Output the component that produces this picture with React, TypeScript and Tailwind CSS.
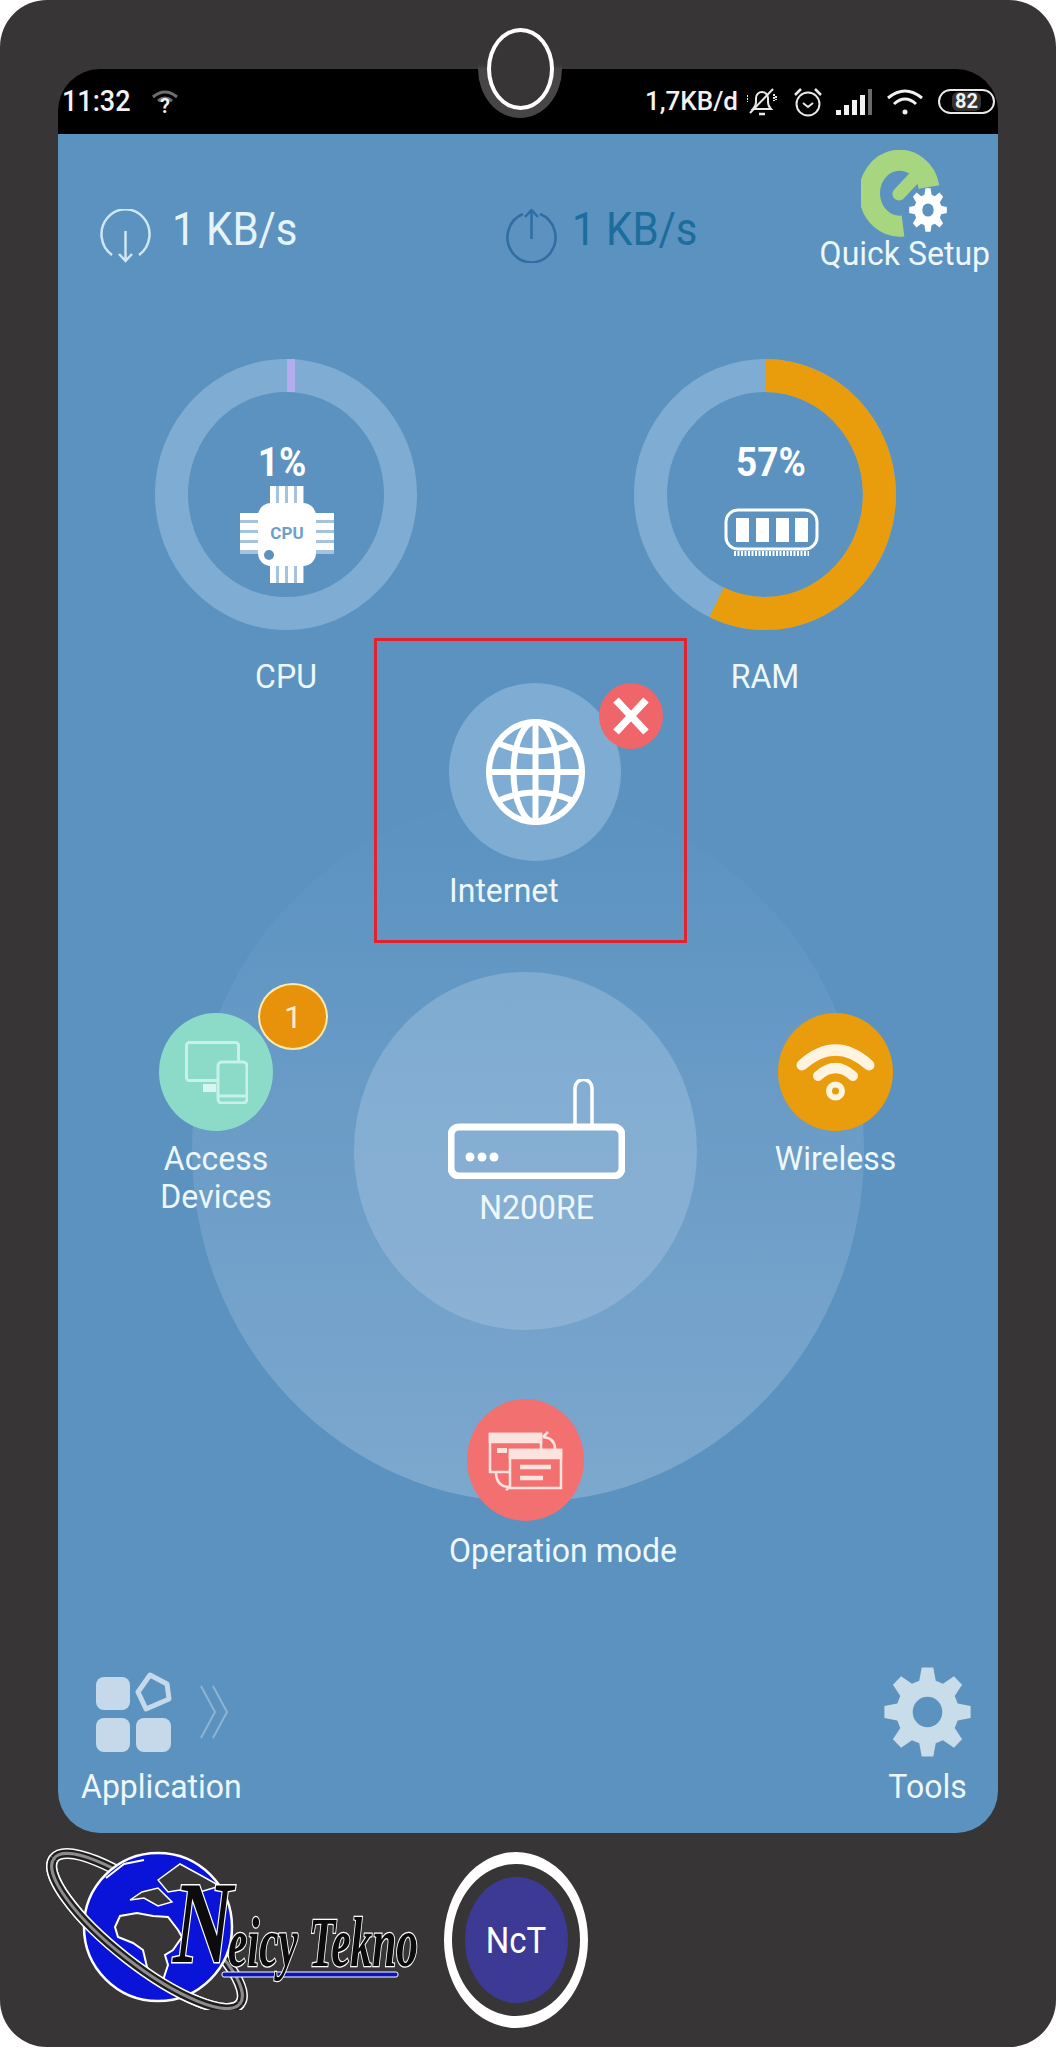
function gearPath(teeth: number, rOut: number, rIn: number, hole: number, c: number) {
  const pts: string[] = [];
  const step = (Math.PI * 2) / teeth;
  for (let i = 0; i < teeth; i++) {
    const a = i * step - Math.PI / 2;
    const p = (r: number, d: number) => `${(c + r * Math.cos(a + d)).toFixed(2)} ${(c + r * Math.sin(a + d)).toFixed(2)}`;
    pts.push(p(rIn, -step * 0.34), p(rOut, -step * 0.17), p(rOut, step * 0.17), p(rIn, step * 0.34));
  }
  const ring = `M${c - hole} ${c}a${hole} ${hole} 0 1 0 ${hole * 2} 0a${hole} ${hole} 0 1 0 ${-hole * 2} 0Z`;
  return `M${pts.join("L")}Z${ring}`;
}

function Label({ children, className = "" }: { children: React.ReactNode; className?: string }) {
  return <div className={`scale-y-105 whitespace-nowrap text-[32px] leading-[36px] text-[#eef7fa] ${className}`}>{children}</div>;
}

function StatusBar() {
  return (
    <div className="flex h-[65px] items-center rounded-t-[42px] bg-black pl-[4px] pr-[3px] text-[#f2f2f2]">
      <span className="scale-y-110 text-[27px] font-medium">11:32</span>
      {/* wifi with question mark */}
      <svg className="ml-[19px]" width="30" height="25" viewBox="0 0 30 25" fill="none">
        <path d="M3 8Q15 -2 27 8" stroke="#6e6e6e" strokeWidth="3" />
        <path d="M8 12Q15 6 22 12" stroke="#6e6e6e" strokeWidth="3" />
        <text x="15" y="24" textAnchor="middle" fontSize="20" fontWeight="700" fill="#f0f0f0">?</text>
      </svg>
      <span className="ml-auto text-[26px] font-medium">1,7KB/d</span>
      {/* muted bell */}
      <svg className="ml-[9px]" width="30" height="29" viewBox="0 0 30 29" fill="none" stroke="#e8e8e8" strokeWidth="2">
        <path d="M6 22h18c-2-2-3-4-3-7V11a6 6 0 0 0-12 0v4c0 3-1 5-3 7Z" />
        <path d="M12 27h6" strokeWidth="2.5" />
        <path d="M3 26 26 2" />
        <path d="M0 8v7M27 7v7M29 9v4" strokeDasharray="2 1" />
      </svg>
      {/* alarm */}
      <svg className="ml-[16px]" width="30" height="30" viewBox="0 0 30 30" fill="none" stroke="#e8e8e8" strokeWidth="2">
        <circle cx="15" cy="17" r="11.5" />
        <path d="M10 16l5 4 5-4" />
        <path d="M2 8 8 2M28 8l-6-6" strokeWidth="2.5" />
      </svg>
      {/* signal */}
      <svg className="ml-[13px]" width="36" height="26" viewBox="0 0 36 26">
        <rect x="0" y="21" width="5" height="5" fill="#f2f2f2" />
        <rect x="8" y="16" width="5" height="10" fill="#f2f2f2" />
        <rect x="16" y="11" width="5" height="15" fill="#f2f2f2" />
        <rect x="24" y="6" width="5" height="20" fill="#f2f2f2" />
        <rect x="32" y="0" width="4" height="26" fill="#6a6a6a" />
      </svg>
      {/* wifi */}
      <svg className="ml-[15px]" width="36" height="26" viewBox="0 0 36 26" fill="none" stroke="#f2f2f2" strokeWidth="3">
        <path d="M1 9Q18 -5 35 9" />
        <path d="M7 15Q18 5 29 15" />
        <circle cx="18" cy="23" r="2.5" fill="#f2f2f2" stroke="none" />
      </svg>
      {/* battery */}
      <div className="ml-[15px] flex h-[25px] w-[57px] items-center justify-center rounded-[13px] border-2 border-[#e8e8e8] text-[20px] font-bold">
        <span className="rounded-[6px] bg-[#333] px-[3px] leading-[19px]">82</span>
      </div>
    </div>
  );
}

function Speed({ up, gap, width }: { up?: boolean; gap: string; width?: string }) {
  const stroke = up ? "#2f6da3" : "#cfe6f3";
  return (
    <div className={`flex items-start ${gap} ${width ?? ""}`}>
      <svg width="51" height="54" viewBox="0 0 51 54" fill="none" stroke={stroke} strokeWidth="2.5">
        {up ? (
          <>
            <path d="M17 5A24 25 0 1 0 34 5" />
            <path d="M25.5 1V30M19 8l6.500-7 6.500 7" />
          </>
        ) : (
          <>
            <path d="M12 46A24 25 0 1 1 39 46" />
            <path d="M25.500 22V52M19 45l6.500 7 6.500-7" />
          </>
        )}
      </svg>
      <span className={`scale-y-110 text-[42px] leading-[42px] ${up ? "text-[#1c6d9c]" : "text-[#e6f3f9]"}`}>1 KB/s</span>
    </div>
  );
}

function QuickSetup() {
  return (
    <div className="ml-auto flex flex-col items-center pr-[8px] pt-[16px]">
      <div className="relative ml-[-1px] h-[87px] w-[86px]">
        <svg width="80" height="87" viewBox="0 0 80 87" fill="none" stroke="#a8d580">
          <path d="M68 37A30 33 0 1 0 42 76" strokeWidth="21" />
          <path d="M38 44 52 29" strokeWidth="13" strokeLinecap="round" />
        </svg>
        <svg className="absolute right-0 top-[38px]" width="38" height="44" viewBox="0 0 100 100" preserveAspectRatio="none">
          <path d={gearPath(8, 50, 36, 15, 50)} fill="white" fillRule="evenodd" />
        </svg>
      </div>
      <Label className="mb-[5px] mt-[-2px]">Quick Setup</Label>
    </div>
  );
}

function Gauge({ label, percent, percentClass, arc, children }: { label: string; percent: string; percentClass: string; arc: React.ReactNode; children: React.ReactNode }) {
  return (
    <div className="flex w-[262px] flex-col items-center">
      <div className="relative h-[271px] w-[262px]">
        <svg className="absolute inset-0" width="262" height="271" viewBox="0 0 262 271" fill="none">
          <ellipse cx="131" cy="135.500" rx="114.500" ry="119" stroke="#7facd2" strokeWidth="33" />
          {arc}
        </svg>
        <div className="relative flex flex-col items-center pt-[84px]">
          <div className={`scale-y-110 text-[37px] font-bold leading-[40px] text-white ${percentClass}`}>{percent}</div>
          {children}
        </div>
      </div>
      <Label className="mt-[28px]">{label}</Label>
    </div>
  );
}

function ChipIcon() {
  return (
    <svg className="ml-[2px] mt-[3px]" width="94" height="97" viewBox="0 0 94 97" fill="white">
      <rect x="30" y="0" width="34" height="97" opacity="0.45" />
      <rect x="0" y="27" width="94" height="41" opacity="0.45" />
      {[30, 39, 48, 57].map((x) => (
        <rect key={x} x={x} y="0" width="6" height="97" />
      ))}
      {[27, 37, 47, 57].map((y) => (
        <rect key={y} x="0" y={y} width="94" height="7" />
      ))}
      <rect x="18" y="17" width="58" height="63" rx="13" />
      <text x="47" y="53" textAnchor="middle" fontSize="17" fontWeight="700" fill="#6d9fc8">CPU</text>
      <circle cx="29" cy="69" r="5" fill="#5b92c0" />
    </svg>
  );
}

function RamIcon() {
  return (
    <svg className="ml-[13px] mt-[25px]" width="95" height="49" viewBox="0 0 95 49" fill="none">
      <rect x="2" y="2" width="91" height="39" rx="12" stroke="white" strokeWidth="3" />
      {[12, 32, 52, 71].map((x) => (
        <rect key={x} x={x} y="10" width="13" height="24" fill="white" />
      ))}
      <path d="M10 45.500H85" stroke="white" strokeWidth="5" strokeDasharray="2 1.500" />
    </svg>
  );
}

function GlobeIcon() {
  return (
    <svg width="99" height="106" viewBox="0 0 99 106" fill="none" stroke="white" strokeWidth="6">
      <ellipse cx="49.500" cy="53" rx="46.500" ry="50" />
      <ellipse cx="49.500" cy="53" rx="22" ry="50" />
      <path d="M49.500 3V103M4 53H95M14 25Q49.500 40 85 25M14 81Q49.500 66 85 81" />
    </svg>
  );
}

function RouterIcon() {
  return (
    <svg width="177" height="100" viewBox="0 0 177 100" fill="none" stroke="white">
      <path d="M127 46V9a8.500 8.500 0 0 1 17 0V46" strokeWidth="3.500" />
      <rect x="3" y="48" width="171" height="49" rx="8" strokeWidth="7" />
      <g fill="white" stroke="none">
        <circle cx="22" cy="78" r="4.500" />
        <circle cx="34" cy="78" r="4.500" />
        <circle cx="46" cy="78" r="4.500" />
      </g>
    </svg>
  );
}

function DevicesIcon() {
  return (
    <svg width="63" height="63" viewBox="0 0 63 63" fill="none" stroke="#c9f1e7" strokeWidth="3">
      <rect x="1.500" y="1.500" width="52" height="38" rx="3" />
      <rect x="18" y="43" width="13" height="8" fill="#d8f6ee" stroke="none" />
      <rect x="33" y="21" width="29" height="41" rx="4" fill="#8bdbc8" />
      <path d="M33 55H62" />
    </svg>
  );
}

function OperationIcon() {
  return (
    <svg width="75" height="64" viewBox="0 0 75 64" fill="none" stroke="#fde3de" strokeWidth="2.500">
      <rect x="2" y="6" width="51" height="38" />
      <rect x="2" y="6" width="51" height="8" fill="#fde3de" />
      <rect x="9" y="20" width="10" height="5" fill="#fde3de" stroke="none" />
      <path d="M55 9q12 1 12 12M55 9l5-5M8 44q0 15 14 15M22 59l-4 3" />
      <rect x="22" y="22" width="51" height="38" fill="#f2706f" />
      <rect x="22" y="22" width="51" height="8" fill="#fde3de" />
      <path d="M32 39H63M32 50H55" strokeWidth="4.500" />
    </svg>
  );
}

function WifiIcon() {
  return (
    <svg width="79" height="58" viewBox="0 0 79 58" fill="none" stroke="#fff4e0" strokeLinecap="round">
      <path d="M6 22Q39.500 -8 73 22" strokeWidth="11" />
      <path d="M22 33Q39.500 17 57 33" strokeWidth="10" />
      <circle cx="39.500" cy="48" r="6.500" strokeWidth="6" />
    </svg>
  );
}

function Diagram() {
  return (
    <div className="absolute inset-0">
      {/* outer disc */}
      <div className="absolute left-[134px] top-[666px] h-[702px] w-[672px] rounded-[50%] bg-linear-to-b from-[#5c93c1] from-5% to-[#7da8ce]" />

      {/* N200RE */}
      <div className="absolute left-[296px] top-[838px] flex h-[358px] w-[343px] flex-col items-center rounded-[50%] bg-linear-to-b from-[#7fabd1] to-[#8bb1d4] pl-[22px] pt-[107px]">
        <RouterIcon />
        <Label className="mt-[10px]">N200RE</Label>
      </div>

      {/* Internet highlighted */}
      <div className="absolute left-[316px] top-[504px] h-[305px] w-[313px] border-[3px] border-[#e2222f]">
        <div className="flex flex-col items-start pl-[72px] pt-[42px]">
          <div className="relative flex h-[178px] w-[172px] items-center justify-center rounded-[50%] bg-[#7facd2]">
            <GlobeIcon />
            <div className="absolute left-[150px] top-0 flex h-[66px] w-[64px] items-center justify-center rounded-[50%] bg-[#f0656a]">
              <svg width="38" height="40" viewBox="0 0 38 40" stroke="white" strokeWidth="7.500">
                <path d="M4 4 34 36M34 4 4 36" />
              </svg>
            </div>
          </div>
          <Label className="mt-[11px]">Internet</Label>
        </div>
      </div>

      {/* Access devices */}
      <div className="absolute left-[101px] top-[879px] flex w-[114px] flex-col items-center">
        <div className="relative flex h-[118px] w-[114px] items-center justify-center rounded-[50%] bg-[#8bdbc8]">
          <DevicesIcon />
          <div className="absolute left-[99px] top-[-30px] flex h-[67px] w-[70px] items-center justify-center rounded-[50%] border-2 border-[#fbeab0] bg-[#e8920c] text-[32px] text-[#fdeecb]">1</div>
        </div>
        <div className="mt-[10px] scale-y-105 whitespace-nowrap text-center text-[32px] leading-[37px] text-[#eef7fa]">
          Access
          <br />
          Devices
        </div>
      </div>

      {/* Wireless */}
      <div className="absolute left-[717px] top-[879px] flex w-[121px] flex-col items-center">
        <div className="flex h-[118px] w-[115px] items-center justify-center rounded-[50%] bg-[#e99c0c]">
          <WifiIcon />
        </div>
        <Label className="mt-[9px]">Wireless</Label>
      </div>

      {/* Operation mode */}
      <div className="absolute left-[391px] top-[1265px] flex flex-col items-start">
        <div className="ml-[18px] flex h-[122px] w-[117px] items-center justify-center rounded-[50%] bg-[#f2706f]">
          <OperationIcon />
        </div>
        <Label className="mt-[11px]">Operation mode</Label>
      </div>
    </div>
  );
}

function BottomBar() {
  return (
    <div className="relative mt-auto flex items-end justify-between pb-[29px] pl-[23px] pr-[27px]">
      <div className="flex flex-col items-start">
        <div className="flex items-center pl-[15px]">
          <svg width="76" height="80" viewBox="0 0 76 80" fill="#c5d9ea">
            <rect x="0" y="5" width="34" height="33" rx="8" />
            <rect x="0" y="46" width="34" height="34" rx="8" />
            <rect x="40" y="46" width="35" height="34" rx="8" />
            <path d="M54 3 71 12 73 27 50 37 42 20Z" fill="none" stroke="#c5d9ea" strokeWidth="5" strokeLinejoin="round" />
          </svg>
          <svg className="ml-[27px]" width="30" height="54" viewBox="0 0 30 54" fill="none" stroke="#8db4d4" strokeWidth="2">
            <path d="M2 1 16 27 2 53M14 1 28 27 14 53" />
          </svg>
        </div>
        <Label className="mt-[16px]">Application</Label>
      </div>
      <div className="flex flex-col items-center">
        <svg width="87" height="90" viewBox="0 0 100 100" preserveAspectRatio="none">
          <path d={gearPath(8, 50, 36, 17, 50)} fill="#c9dcea" fillRule="evenodd" />
        </svg>
        <Label className="mt-[11px]">Tools</Label>
      </div>
    </div>
  );
}

function NeicyLogo() {
  return (
    <svg width="400" height="170" viewBox="0 0 400 170" fill="none" className="shrink-0">
      {/* orbit back */}
      <g transform="rotate(38 107 91)">
        <ellipse cx="107" cy="91" rx="118" ry="34" stroke="white" strokeWidth="11" />
        <ellipse cx="107" cy="91" rx="118" ry="34" stroke="#1f1f1f" strokeWidth="8" />
        <ellipse cx="107" cy="91" rx="118" ry="34" stroke="#8c8c8c" strokeWidth="3" />
      </g>
      {/* globe */}
      <circle cx="118" cy="87" r="74" fill="#0a14d8" stroke="white" strokeWidth="2.500" />
      {/* africa */}
      <path d="M75 87 80 76 97 73 113 76 128 77 138 90 142 97 133 110 125 115 128 125 123 140 115 138 107 127 103 110 93 103 78 97Z" fill="#373536" stroke="white" strokeWidth="2" />
      {/* europe and asia */}
      <path d="M90 60 102 52 118 48 132 62 118 66 104 58Z" fill="#373536" stroke="white" strokeWidth="1.500" />
      <path d="M118 40 140 24 162 36 180 46 160 52 140 50 128 52Z" fill="#373536" stroke="white" strokeWidth="1.500" />
      <path d="M66 38 84 24 104 20" stroke="white" strokeWidth="2" />
      {/* orbit front */}
      <g transform="rotate(38 107 91)">
        <path d="M-11 91A118 34 0 0 0 225 91" stroke="white" strokeWidth="11" />
        <path d="M-11 91A118 34 0 0 0 225 91" stroke="#1f1f1f" strokeWidth="8" />
        <path d="M-11 91A118 34 0 0 0 225 91" stroke="#8c8c8c" strokeWidth="3" />
      </g>
      {/* wordmark */}
      <rect x="182" y="132" width="176" height="5" rx="2" fill="#0a14b8" stroke="white" strokeWidth="1" />
      <g className="[font-family:'Liberation_Serif',serif]" fontStyle="italic" fontWeight="700" fill="#0c0c0c" stroke="white" paintOrder="stroke">
        <text x="133" y="122" fontSize="116" textLength="60" lengthAdjust="spacingAndGlyphs" strokeWidth="3">N</text>
        <text x="188" y="126" fontSize="70" textLength="190" lengthAdjust="spacingAndGlyphs" strokeWidth="2.500">eicy Tekno</text>
      </g>
    </svg>
  );
}

function NctBadge() {
  return (
    <div className="ml-[4px] mt-[12px] flex h-[176px] w-[144px] shrink-0 items-center justify-center rounded-[50%] border-x-8 border-y-[12px] border-white">
      <div className="flex h-[126px] w-[103px] items-center justify-center rounded-[50%] bg-[#3d3a96] text-[33px] leading-none text-white">
        <span className="scale-y-110">NcT</span>
      </div>
    </div>
  );
}

export default function App() {
  return (
    <div className="h-[2048px] w-[1056px] bg-white [font-family:Roboto,sans-serif]">
      <div className="relative flex h-[2047px] flex-col rounded-[47px] bg-[#373536]">
        {/* camera */}
        <div className="absolute left-[478px] top-[20px] z-10 flex h-[98px] w-[84px] items-center justify-center rounded-[50%] bg-linear-to-b from-[#373536] from-45% to-[#474546] to-50%">
          <div className="h-[82px] w-[67px] rounded-[50%] border-4 border-white bg-[#373536]" />
        </div>

        <div className="px-[58px] pt-[69px]">
          <StatusBar />
          <main className="relative flex h-[1699px] flex-col overflow-hidden rounded-b-[42px] bg-[#5b92c0]">
            <Diagram />
            <div className="relative flex items-start pl-[42px]">
              <div className="mt-[75px]">
                <Speed gap="gap-[21px]" width="w-[406px]" />
              </div>
              <div className="mt-[75px]">
                <Speed up gap="gap-[15px]" />
              </div>
              <QuickSetup />
            </div>
            <div className="pointer-events-none relative mt-[83px] flex gap-[217px] pl-[97px]">
              <Gauge
                label="CPU"
                percent="1%"
                percentClass="ml-[-8px]"
                arc={<rect x="132" y="0" width="8" height="33" fill="#b3adf0" />}
              >
                <ChipIcon />
              </Gauge>
              <Gauge
                label="RAM"
                percent="57%"
                percentClass="ml-[12px]"
                arc={<path d="M131 16.500A114.500 119 0 1 1 82.600 243.400" stroke="#e99c0c" strokeWidth="33" />}
              >
                <RamIcon />
              </Gauge>
            </div>
            <BottomBar />
          </main>
        </div>

        <footer className="flex items-start pl-[40px] pt-[7px]">
          <NeicyLogo />
          <NctBadge />
        </footer>
      </div>
    </div>
  );
}
